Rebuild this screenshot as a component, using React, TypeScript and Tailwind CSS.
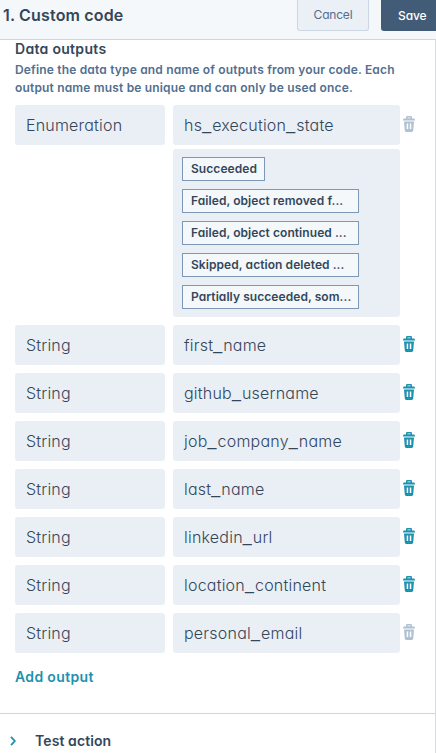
import React from "react";

interface Output {
  type: string;
  name: string;
  locked?: boolean;
  options?: string[];
}

const outputs: Output[] = [
  {
    type: "Enumeration",
    name: "hs_execution_state",
    locked: true,
    options: [
      "Succeeded",
      "Failed, object removed f...",
      "Failed, object continued ...",
      "Skipped, action deleted ...",
      "Partially succeeded, som...",
    ],
  },
  { type: "String", name: "first_name" },
  { type: "String", name: "github_username" },
  { type: "String", name: "job_company_name" },
  { type: "String", name: "last_name" },
  { type: "String", name: "linkedin_url" },
  { type: "String", name: "location_continent" },
  { type: "String", name: "personal_email", locked: true },
];

const TrashIcon = () => (
  <svg width="12" height="16" viewBox="0 0 12 16" fill="none">
    <path
      fillRule="evenodd"
      d="M3 3V1.2Q3 0 4.2 0H7.8Q9 0 9 1.2V3ZM4.5 1.6V2.6H7.5V1.6Z"
      fill="currentColor"
    />
    <path
      d="M1 2.6H11Q12 2.8 12 4.6H0Q0 2.8 1 2.6Z"
      fill="currentColor"
    />
    <path
      fillRule="evenodd"
      d="M1 5.5H11L10.2 14.6Q10.1 16 8.8 16H3.2Q1.9 16 1.8 14.6ZM3.7 7.5V13H5.2V7.5ZM6.8 7.5V13H8.3V7.5Z"
      fill="currentColor"
    />
  </svg>
);

// Underscores are set wider than the surrounding text
const OutputName = ({ name }: { name: string }) => (
  <>
    {name.split(/(_)/).map((part, i) =>
      part === "_" ? (
        <span
          key={i}
          className="relative -top-px font-['Liberation_Sans',sans-serif] tracking-[1.1px]"
        >
          _
        </span>
      ) : (
        part
      )
    )}
  </>
);

const OutputRow = ({ type, name, locked, options }: Output) => (
  <div>
    <div className="flex h-10">
      <div className="w-[150px] rounded-[3px] bg-[#eaeff6] pl-[11px] text-base leading-10 font-light tracking-[0.2px]">
        {type}
      </div>
      <div className="ml-2 w-[227px] rounded-[3px] bg-[#eaeff6] pl-[11px] text-base leading-10 font-light tracking-[0.22px]">
        <OutputName name={name} />
      </div>
      <button
        aria-label="Delete output"
        disabled={locked}
        className={`ml-[3px] mt-[11px] h-4 w-3 ${locked ? "text-[#b0c1d4]" : "text-[#1e91ae]"}`}
      >
        <TrashIcon />
      </button>
    </div>
    {options && (
      <div className="mt-1 ml-[158px] flex h-[168px] w-[227px] flex-col items-start gap-2 rounded-[3px] bg-[#eaeff6] pt-2 pl-[9px]">
        {options.map((option) => (
          <span
            key={option}
            className={`h-6 border border-[#7c98b6] bg-[#f5f8fa] pl-2 text-xs leading-[22px] font-semibold tracking-[0.07px] whitespace-nowrap ${
              option === "Succeeded" ? "w-[83px]" : "w-[177px]"
            }`}
          >
            {option}
          </span>
        ))}
      </div>
    )}
  </div>
);

const App = () => {
  return (
    <div className="h-[753px] w-[436px] overflow-hidden bg-white font-['Inter',sans-serif] text-[#33475b] [font-feature-settings:'cv11'_1]">
      <header className="flex h-10 border-b border-[#cbd6e2] bg-[#f5f8fa]">
        <h1 className="w-[297px] pl-[3px] text-base leading-[30px] font-semibold tracking-[0.17px] whitespace-nowrap">
          1. Custom code
        </h1>
        <button className="h-[31px] w-[72px] rounded-b-[3px] border border-t-0 border-[#cbd6e2] bg-[#eaf0f6] text-xs tracking-[-0.2px] text-[#506e91]">
          Cancel
        </button>
        <button className="ml-3 h-[31px] w-[55px] rounded-bl-[3px] bg-[#425b76] pl-[17px] text-left text-xs font-medium tracking-[-0.1px] text-white">
          Save
        </button>
      </header>

      <div className="h-[713px] border-r border-[#d8dce1]">
        <section className="h-[674px] border-b border-[#cbd6e2] pl-[15px]">
          <h2 className="text-sm leading-[18px] font-semibold tracking-[0.3px]">
            Data outputs
          </h2>
          <p className="mt-[3px] text-xs leading-[18px] font-semibold tracking-[0.17px] whitespace-nowrap text-[#516f90]">
            Define the data type and name of outputs from your code. Each
            <br />
            output name must be unique and can only be used once.
          </p>
          <div className="mt-2 flex flex-col gap-2">
            {outputs.map((output) => (
              <OutputRow key={output.name} {...output} />
            ))}
          </div>
          <button className="mt-[14px] block text-sm leading-5 font-semibold tracking-[0.35px] text-[#1e91ae]">
            Add output
          </button>
        </section>

        <div className="flex h-[39px] items-center pt-[15px] pl-[10px]">
          <svg width="6" height="10" viewBox="0 0 6 10" fill="none">
            <path d="M1 .8L4.8 5L1 9.2" stroke="#1e91ae" strokeWidth="1.8" />
          </svg>
          <span className="ml-[19px] text-sm font-semibold tracking-[0.1px]">
            Test action
          </span>
        </div>
      </div>
    </div>
  );
};

export default App;
